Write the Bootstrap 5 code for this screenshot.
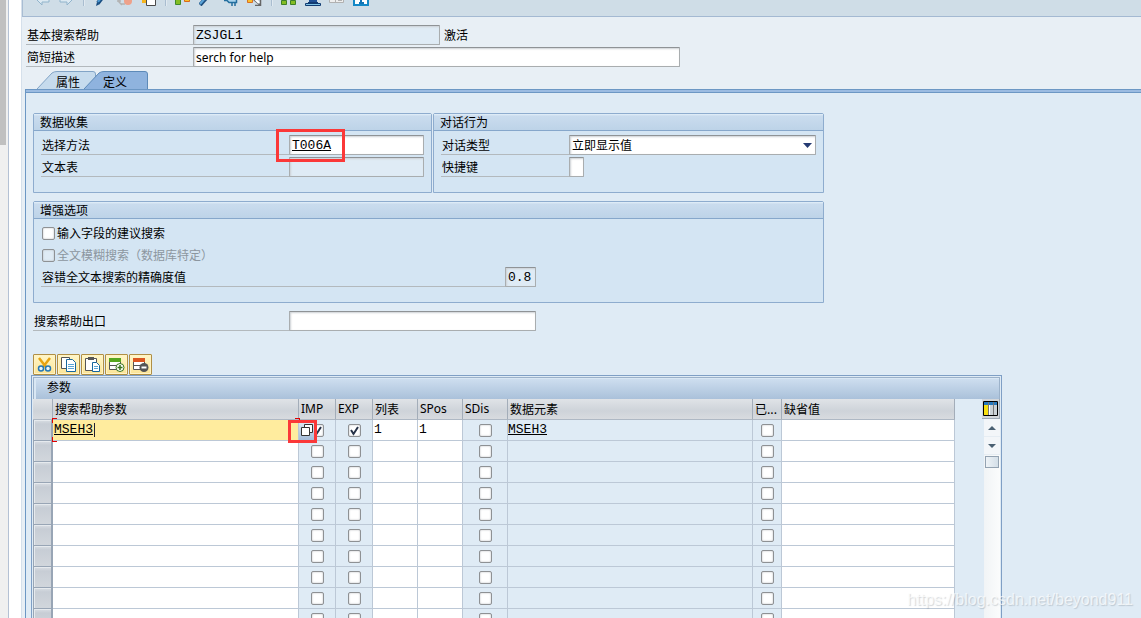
<!DOCTYPE html>
<html lang="zh-CN">
<head>
<meta charset="utf-8">
<meta name="viewport" content="width=device-width, initial-scale=1">
<title>基本搜索帮助 ZSJGL1</title>
<link href="https://cdn.jsdelivr.net/npm/bootstrap@5.3.0/dist/css/bootstrap.min.css" rel="stylesheet">
<style>
:root{--line:#8eacce;--under:#b3b9bd;--soft:#dfebf5;--grid:#bcc8d6}
body{font:12px/20px "Liberation Sans","Noto Sans CJK SC",sans-serif;color:#000;background:#dfebf5}
.zh{font-family:"Noto Sans CJK SC",sans-serif}
.mono{font-family:"Liberation Mono",monospace;font-size:13px}
.latin{font-family:"Noto Sans",sans-serif;font-size:12px}
.gutter{width:22px;background:#fff;border-right:1px solid #d5e0eb}
.outer-scroll{width:9px;background:#f0f0f0;border-right:1px solid #b4c1d4}
.outer-thumb{width:6px;height:145px;background:#c0c0c0}
.sheet{background:#e8eff5;font-family:"Noto Sans CJK SC",sans-serif}
.app-bar{height:17px;background:#cfdde7;border-left:1px solid #a9bdd3;border-bottom:1px solid #a4b9d2;padding:0 0 10px 12px}
.app-bar .btn{width:16px;height:16px;border:0}
.app-bar svg{display:block}
.split{width:2px;height:6px;background:#a9bdd0;border-right:1px solid #e0e9f0}
.rows-2{row-gap:2px}
.hair{column-gap:1px}
.field{height:20px;padding:0 2px;border:1px solid #a9adaf;border-top-color:#8f9396;border-radius:1px;background:#fff;box-shadow:inset 1px 1px 2px #ccd0d4;color:#000;line-height:18px;min-width:0}
select.field{appearance:none}
.field.locked{background:#dfebf5}
.lbl{height:20px;border-bottom:1px solid var(--under);padding-left:1px;white-space:nowrap}
.w-id{width:247px}.w-desc{width:487px}.w-src{width:135px}.w-key{width:15px}.w-num{width:31px}
.lbl-top{width:167px}.lbl-src{width:248px}.lbl-dlg{width:128px}.lbl-acc{width:464px}.lbl-exit{width:256px}
.tabs{height:18px;padding-left:15px}
.tab{position:relative;height:18px;border:0;background:none;padding:2px 0 0 19px;text-align:left;line-height:18px;width:59px;color:#000}
.tab.current{width:64px;margin-left:-12px}
.tab svg{position:absolute;inset:0;width:100%;height:100%}
.tab span{position:relative}
.page-pane{background:var(--soft);border:solid #6c97c4;border-width:1px 0 0 1px;margin-left:3px}
.pane-strip{height:3px;background:#9bbbe1;border-bottom:1px solid #6c97c4}
.pane-body{padding:20px 0 0 7px}
.groups{max-width:791px}
.box{border:1px solid var(--line);background:#d4e5f3;border-radius:2px 2px 0 0}
.box h2{font-size:12px;font-weight:400;line-height:16px;height:17px;margin:0;padding-left:6px;border-bottom:1px solid #86a7cb;background:linear-gradient(#e4f0f9,#cadcee 2px,#bdd3e8)}
.box-body{padding:4px 7px 15px}
.box-a{flex:399 1 0}.box-b{flex:391 1 0}
.tick-row{padding-left:1px;column-gap:2px}
.tick{appearance:none;width:13px;height:13px;margin:0;border:1px solid #8e9194;border-radius:2px;background:#fff;box-shadow:inset 0 0 2px #b5b8bb;flex:none}
.tick:checked{background:#fff url("data:image/svg+xml,%3Csvg xmlns='http://www.w3.org/2000/svg' viewBox='0 0 11 11'%3E%3Cpath d='M2 5l2.5 4L9 2' fill='none' stroke='%23263248' stroke-width='2'/%3E%3C/svg%3E")}
.tick:disabled{background:#dfebf5}
.off{color:#8c969f}
.tools{margin-top:23px}
.tool{width:23px;height:21px;padding:0;border:1px solid #b08f45;border-radius:1px;background:linear-gradient(#fff6c8,#fbe496);box-shadow:inset 0 0 0 1px #fff3c4}
.tool svg{display:block;margin:auto}
.grid-box{max-width:971px;border:1px solid #7f9fc5;padding:1px;margin-left:-2px}
.grid-title{height:22px;border:1px solid #9cb2ca;border-bottom:0;padding-left:13px;line-height:18px;background:linear-gradient(#cfdff0,#aac1da);box-shadow:inset 2px 1px 0 #d9e7f4}
.params{width:922px;table-layout:fixed;border-collapse:separate;border-spacing:0}
.params th,.params td{height:21px;padding:0;border:0 solid var(--grid);border-width:0 1px 1px 0;white-space:nowrap;overflow:hidden;line-height:20px}
.params thead th{font-weight:400;padding-left:2px;background:linear-gradient(#e0e3e7,#ced3d9 60%,#d8dbdf);border-right-color:#a3adb9;border-bottom-color:#aeb8c4}
.params tbody th{background:linear-gradient(#d9dee4,#c7cdd5 20%,#d1d6dc);border:solid #98a5b5;border-width:0 2px 1px 1px;box-shadow:inset 1px 1px 0 #e6eaee}
.params td.edit{background:#fff}
.params td .tick{display:block;margin:auto}
.params input.cell{display:block;width:100%;height:20px;border:0;padding:0 1px;background:transparent;outline:0;color:#000}
.params td.now{background:#ffec9e}
.params td a{color:#000}
.c-sel{width:20px}.c-wide{width:246px}.c-flag{width:37px}.c-pos{width:45px}.c-elem{width:245px}.c-mod{width:29px}.c-def{width:173px}
.corner{position:absolute;width:5px;height:5px;border:0 solid #e00000}
.corner-tl{left:19px;top:19px;border-width:1px 0 0 1px}
.corner-bl{left:19px;top:38px;border-width:0 0 1px 1px}
.corner-tr{left:262px;top:19px;border-width:1px 1px 0 0}
.caret{position:absolute;left:61px;top:24px;width:1px;height:14px;background:#223}
.mark-red{position:absolute;border:3px solid #fb3838;pointer-events:none}
.mark-src{left:-13px;top:-6px;width:69px;height:33px}
.match{position:absolute;left:266px;top:23px;width:15px;height:18px;padding:0;border:0;overflow:hidden;background:linear-gradient(#dce8f3,#a4bcd9)}
.mark-match{left:255px;top:21px;width:29px;height:23px}
.vbar{width:16px;background:linear-gradient(90deg,#f1f4f6,#fbfcfc)}
.vbar button{display:block;width:16px;height:18px;padding:0;border:0;background:#f3f6f9;border-bottom:1px solid #e6edf3}
.vbar svg{display:block;margin:auto}
.vbar .cfg{width:18px;height:20px;margin-left:-2px;background:#d3d6da;border:solid #9ea9b5;border-width:0 1px 1px 0}
.vthumb{width:14px;height:12px;margin:1px;border:1px solid #94a3b2;background:linear-gradient(90deg,#eef3f7,#d4dfe8)}
.wm{position:absolute;right:8px;bottom:8px;font:16px/20px "Liberation Sans",sans-serif;color:rgba(255,255,255,.7);text-shadow:1px 1px 1px rgba(130,140,150,.35)}
</style>
</head>
<body class="vh-100 overflow-hidden position-relative">
<div class="d-flex h-100">
  <aside class="gutter flex-shrink-0"><div class="outer-scroll h-100"><div class="outer-thumb"></div></div></aside>
  <main class="sheet flex-grow-1 overflow-hidden">
    <div class="app-bar d-flex align-items-end gap-2 overflow-hidden" role="toolbar">
      <button class="btn p-0" aria-label="后退"><svg width="16" height="16"><path d="M1 9l6-6v4h7v5H7v3z" fill="#dce9f2" stroke="#91b4cc"/></svg></button>
      <button class="btn p-0" aria-label="前进"><svg width="16" height="16"><path d="M14 9L8 3v4H1v5h7v3z" fill="#dce9f2" stroke="#91b4cc"/></svg></button>
      <i class="split"></i>
      <button class="btn p-0" aria-label="显示更改"><svg width="16" height="16"><path d="M5 13l7-9" stroke="#174c80" stroke-width="4"/><path d="M5 12l7-9" stroke="#4c9ad4" stroke-width="2"/><path d="M3 16l1-4 3 2z" fill="#174c80"/></svg></button>
      <button class="btn p-0" aria-label="激活"><svg width="16" height="16"><circle cx="11" cy="11" r="4" fill="#eea18a"/><path d="M2 9v3l3 3M0 11h4M4 14h4" fill="none" stroke="#b2b2b2" stroke-width="1.5"/></svg></button>
      <button class="btn p-0" aria-label="复制"><svg width="16" height="16"><path d="M1 9h5v4H1z" fill="#f5b51c"/><path d="M5.500 5.500h9v10h-9z" fill="#fff" stroke="#4a4a4a"/></svg></button>
      <i class="split"></i>
      <button class="btn p-0" aria-label="检查"><svg width="16" height="16"><path d="M.5 7.500h5v7h-5z" fill="#83bd24" stroke="#3f8a2a"/><path d="M9.500 7.500h5v4h-5z" fill="#f9bf28" stroke="#d9691c"/></svg></button>
      <button class="btn p-0" aria-label="激活对象"><svg width="16" height="16"><path d="M1 15l8-9" stroke="#1f5080" stroke-width="4"/><path d="M1 14l8-9" stroke="#5ba5da" stroke-width="2"/></svg></button>
      <button class="btn p-0" aria-label="测试"><svg width="16" height="16"><path d="M1 10.500h3l2 2h7.500V6H5" fill="#a9d3ec" stroke="#236e9e" stroke-width="1.500"/><path d="M9 12v4M12 12v4" fill="none" stroke="#236e9e" stroke-width="1.500"/></svg></button>
      <button class="btn p-0" aria-label="使用位置"><svg width="16" height="16"><path d="M.5 8.500h5v4h-5z" fill="#f9bf28" stroke="#d96e26"/><path d="M6 9l7 6m-5 .5h5.500V10" fill="none" stroke="#666" stroke-width="1.500"/><path d="M8 9l4 4" stroke="#fff" stroke-width="2"/></svg></button>
      <i class="split"></i>
      <button class="btn p-0" aria-label="层次"><svg width="16" height="16"><path d="M.5 10.500h5v4h-5zM9.500 10.500h5v4h-5z" fill="#83bd24" stroke="#3e8029"/></svg></button>
      <button class="btn p-0" aria-label="打印"><svg width="16" height="16"><path d="M4 5h8v7H4z" fill="#1f4f95"/><path d="M.5 13.500h15v2H.5z" fill="#7fc4e8" stroke="#123b72"/><path d="M3 12.500h10" stroke="#123b72"/></svg></button>
      <button class="btn p-0" aria-label="文档"><svg width="16" height="16"><path d="M.5 6.500h14v6H.5zM6.500 6v6M9 10.500h4" fill="#eee" stroke="#b1b1b1"/></svg></button>
      <button class="btn p-0" aria-label="信息"><svg width="16" height="16"><path d="M1 3h14v12H1z" fill="#fff" stroke="#1488c6" stroke-width="2"/><path d="M6 8h2v5M6 13h5" fill="none" stroke="#1475b6" stroke-width="2"/></svg></button>
    </div>

    <form class="d-flex flex-column pt-2 ps-1 rows-2">
      <div class="d-flex"><label class="lbl lbl-top" for="shlp">基本搜索帮助</label><input id="shlp" class="field locked mono w-id" value="ZSJGL1" readonly><span class="ps-1">激活</span></div>
      <div class="d-flex"><label class="lbl lbl-top" for="desc">简短描述</label><input id="desc" class="field latin w-desc" value="serch for help"></div>
    </form>

    <div class="tabs d-flex mt-1" role="tablist">
      <button class="tab zh" role="tab"><svg viewBox="0 0 59 18" preserveAspectRatio="none"><path d="M0 18L15 2Q17 .5 20 .5H56Q58.500 .5 58.500 3V18" fill="#c6dbed" stroke="#82a4c6"/></svg><span>属性</span></button>
      <button class="tab current zh" role="tab" aria-selected="true"><svg viewBox="0 0 64 18" preserveAspectRatio="none"><path d="M0 18L15 2Q17 .5 20 .5H61Q63.500 .5 63.500 3V18" fill="#8fb3de" stroke="#5d8ab8"/></svg><span>定义</span></button>
    </div>

    <div class="page-pane">
      <div class="pane-strip"></div>
      <div class="pane-body">
        <div class="groups d-flex flex-column gap-2">
          <div class="d-flex hair">
            <section class="box box-a"><h2>数据收集</h2>
              <div class="box-body d-grid rows-2">
                <div class="d-flex"><label class="lbl lbl-src" for="src">选择方法</label><div class="position-relative d-flex"><input id="src" class="field mono w-src text-decoration-underline" value="T006A"><span class="mark-red mark-src"></span></div></div>
                <div class="d-flex"><label class="lbl lbl-src" for="txt">文本表</label><input id="txt" class="field locked mono w-src" readonly></div>
              </div></section>
            <section class="box box-b"><h2>对话行为</h2>
              <div class="box-body d-grid rows-2">
                <div class="d-flex"><label class="lbl lbl-dlg flex-shrink-0" for="dlg">对话类型</label><div class="position-relative flex-grow-1 d-flex"><select id="dlg" class="field zh w-100"><option>立即显示值</option></select><svg class="position-absolute end-0 top-0 mt-2 me-1 pe-none" width="9" height="5"><path d="M0 0h9L4.500 5z" fill="#243a72"/></svg></div></div>
                <div class="d-flex"><label class="lbl lbl-dlg" for="hot">快捷键</label><input id="hot" class="field mono w-key"></div>
              </div></section>
          </div>
          <section class="box"><h2>增强选项</h2>
            <div class="box-body d-grid rows-2">
              <div class="d-flex align-items-center tick-row"><input type="checkbox" class="tick" id="sug"><label for="sug">输入字段的建议搜索</label></div>
              <div class="d-flex align-items-center tick-row"><input type="checkbox" class="tick" id="fuz" disabled><label for="fuz" class="off">全文模糊搜索（数据库特定）</label></div>
              <div class="d-flex"><label class="lbl lbl-acc" for="acc">容错全文本搜索的精确度值</label><input id="acc" class="field locked mono w-num" value="0.8" readonly></div>
            </div></section>
          <div class="d-flex"><label class="lbl lbl-exit" for="exit">搜索帮助出口</label><input id="exit" class="field mono w-id"></div>
        </div>

        <div class="d-flex tools hair" role="toolbar">
          <button class="tool" aria-label="剪切"><svg width="17" height="17"><path d="M3 2l7 9M14 2L7 11" stroke="#e6a312" stroke-width="2.500"/><circle cx="5" cy="12.500" r="2.500" fill="#e8f3fa" stroke="#2377b5" stroke-width="1.500"/><circle cx="12" cy="12.500" r="2.500" fill="#e8f3fa" stroke="#2377b5" stroke-width="1.500"/></svg></button>
          <button class="tool" aria-label="复制"><svg width="17" height="17"><path d="M1.500 1.500h8v11h-8z" fill="#fff" stroke="#555"/><path d="M6.500 3.500h6l3 3v9h-9z" fill="#fff" stroke="#16679e"/><path d="M8 8.500h6M8 10.500h6M8 12.500h6" stroke="#5aa5d5"/></svg></button>
          <button class="tool" aria-label="粘贴"><svg width="17" height="17"><path d="M1.500 2.500h11v12h-11z" fill="#fff" stroke="#555"/><path d="M4 1h6v3H4z" fill="#555"/><path d="M8.500 6.500h4l3 3v6h-7z" fill="#fff" stroke="#16679e"/><path d="M10 10.500h4M10 12.500h4" stroke="#5aa5d5"/></svg></button>
          <button class="tool" aria-label="插入行"><svg width="17" height="17"><path d="M1.500 2.500h11v11h-11zM1 9.500h11" fill="#fff" stroke="#555"/><path d="M1 2h12v4H1z" fill="#55a61e"/><circle cx="12" cy="11.500" r="4" fill="#fff" stroke="#38751c"/><path d="M9.500 11.500h5M12 9v5" stroke="#38751c" stroke-width="1.500"/></svg></button>
          <button class="tool" aria-label="删除行"><svg width="17" height="17"><path d="M1.500 2.500h11v11h-11zM1 9.500h11" fill="#fff" stroke="#555"/><path d="M1 2h12v4H1z" fill="#dc5620"/><circle cx="12" cy="11.500" r="4.500" fill="#555"/><path d="M9.500 11.500h5" stroke="#fff" stroke-width="2"/></svg></button>
        </div>

        <div class="grid-box">
          <div class="grid-title">参数</div>
          <div class="d-flex justify-content-between position-relative">
            <table class="params">
              <colgroup><col class="c-sel"><col class="c-wide"><col class="c-flag"><col class="c-flag"><col class="c-pos"><col class="c-pos"><col class="c-pos"><col class="c-elem"><col class="c-mod"><col class="c-def"></colgroup>
              <thead><tr><th></th><th>搜索帮助参数</th><th class="latin">IMP</th><th class="latin">EXP</th><th>列表</th><th class="latin">SPos</th><th class="latin">SDis</th><th>数据元素</th><th>已...</th><th>缺省值</th></tr></thead>
              <tbody id="rows"></tbody>
            </table>
            <span class="corner corner-tl"></span>
            <span class="corner corner-bl"></span>
            <span class="corner corner-tr"></span>
            <span class="caret"></span>
            <button class="match" aria-label="搜索帮助"><svg class="d-block" width="15" height="18"><path d="M5.500 2.500h8v8h-8z" fill="#fff" stroke="#333"/><path d="M2.500 5.500h8v8h-8z" fill="#fff" stroke="#333"/></svg></button>
            <span class="mark-red mark-match"></span>
            <div class="vbar">
              <button class="cfg" aria-label="配置"><svg width="15" height="15"><path d="M.5 .5h14v14H.5z" fill="#fff" stroke="#000"/><path d="M1 1h13v3H1z" fill="#2678bd"/><path d="M1 4h5v10H1z" fill="#f8df10"/><path d="M7 4h3v10H7zM11 4h3v10h-3z" fill="#ccd2d6"/><path d="M5.500 1v13M10.500 1v13" stroke="#777"/></svg></button>
              <button aria-label="向上"><svg width="8" height="4"><path d="M0 4h8L4 0z" fill="#4a6072"/></svg></button>
              <button aria-label="向下"><svg width="8" height="4"><path d="M0 0h8L4 4z" fill="#4a6072"/></svg></button>
              <div class="vthumb"></div>
            </div>
          </div>
        </div>
      </div>
    </div>
  </main>
</div>
<div class="wm">https://blog.csdn.net/beyond911</div>
<script>
// One filled parameter followed by empty lines
const lines = [{name: "MSEH3", imp: true, exp: true, lpos: "1", spos: "1", elem: "MSEH3"}, ...Array.from({length: 10}, () => ({}))];
const tick = (label, on) => `<td><input type="checkbox" class="tick" aria-label="${label}" ${on ? "checked" : ""}></td>`;
const edit = (label, v = "", extra = "", deco = "") => `<td class="edit ${extra}"><input class="cell mono ${deco}" aria-label="${label}" value="${v}"></td>`;
document.getElementById("rows").innerHTML = lines.map(r => `<tr><th></th>` +
  edit("搜索帮助参数", r.name, r.name ? "now" : "", "text-decoration-underline") +
  tick("IMP", r.imp) + tick("EXP", r.exp) + edit("列表", r.lpos) + edit("SPos", r.spos) + tick("SDis") +
  `<td class="mono">${r.elem ? `<a href="#">${r.elem}</a>` : ""}</td>` + tick("已修改") + edit("缺省值") + `</tr>`).join("");
</script>
<script src="https://cdn.jsdelivr.net/npm/bootstrap@5.3.0/dist/js/bootstrap.bundle.min.js"></script>
</body>
</html>
